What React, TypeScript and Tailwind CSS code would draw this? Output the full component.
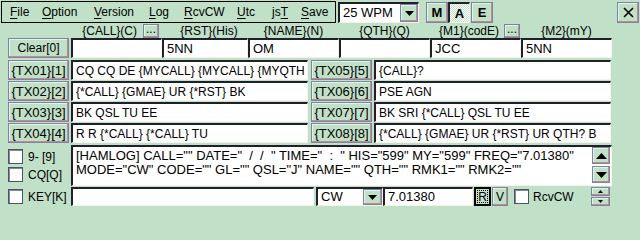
import React from "react";

const face = "bg-[#c0e0c8]";
const btn =
    "bg-[#c0e0c8] border border-[#7c84a4] shadow-[inset_-1px_-1px_0_#c08c8c,inset_1px_1px_0_#e4f2e8] flex items-center justify-center leading-none";
const sunken =
    "bg-white border-t-2 border-l-2 border-b border-r border-t-[#20202c] border-l-[#20202c] border-b-[#f4f4e8] border-r-[#f4f4e8]";

const Tri = ({ up = false, size = "md" }: { up?: boolean; size?: "sm" | "md" | "lg" }) => {
    const [w, h] = size === "sm" ? [5, 3] : size === "lg" ? [11, 6] : [9, 5];
    return (
        <svg width={w} height={h} viewBox={`0 0 ${w} ${h}`}>
            <polygon points={up ? `${w / 2},0 ${w},${h} 0,${h}` : `0,0 ${w},0 ${w / 2},${h}`} fill="#000" />
        </svg>
    );
};

const Field = ({ w, text = "" }: { w: string; text?: string }) => (
    <div className={`${w} h-full ${sunken} flex items-center pl-[3px] whitespace-pre overflow-hidden`}>{text}</div>
);

const Check = ({ label }: { label: string }) => (
    <div className="flex items-center gap-[5px] h-[15px]">
        <div className="w-[15px] h-[15px] bg-white border border-[#4c5464] shadow-[inset_1px_1px_0_#8088a0]" />
        <span>{label}</span>
    </div>
);

const Ellipsis = () => (
    <div className={`${btn} w-[16px] h-[14px] pb-[4px]`}>...</div>
);

const menu: [string, string, string][] = [
    ["", "F", "ile"],
    ["", "O", "ption"],
    ["", "V", "ersion"],
    ["", "L", "og"],
    ["", "R", "cvCW"],
    ["", "U", "tc"],
    ["js", "T", ""],
    ["", "S", "ave"],
];
const menuW = ["w-[32px]", "w-[52px]", "w-[55px]", "w-[35px]", "w-[53px]", "w-[35px]", "w-[29px]", "w-[30px]"];

const tx = [
    ["{TX01}[1]", "CQ CQ DE {MYCALL} {MYCALL} {MYQTH", "{TX05}[5]", "{CALL}?"],
    ["{TX02}[2]", "{*CALL} {GMAE} UR {*RST} BK", "{TX06}[6]", "PSE AGN"],
    ["{TX03}[3]", "BK QSL TU EE", "{TX07}[7]", "BK SRI {*CALL} QSL TU EE"],
    ["{TX04}[4]", "R R {*CALL} {*CALL} TU", "{TX08}[8]", "{*CALL} {GMAE} UR {*RST} UR QTH? B"],
];

export default function App() {
    return (
        <div className={`w-[640px] h-[240px] ${face} text-black text-[12px] font-['Liberation_Sans',Arial,sans-serif] overflow-hidden flex flex-col`}>
            {/* top bar */}
            <div className="flex items-start pt-[1px] h-[23px]">
                <div className="ml-[1px] w-[335px] h-[22px] border border-black flex items-center pl-[8px] leading-none">
                    {menu.map(([a, u, b], i) => (
                        <span key={i} className={`${menuW[i]} shrink-0 whitespace-pre`}>
                            {a}
                            <span className="underline underline-offset-2">{u}</span>
                            {b}
                        </span>
                    ))}
                </div>
                <div className={`ml-[2px] mt-[1px] w-[81px] h-[21px] ${sunken} flex items-center`}>
                    <span className="flex-1 pl-[3px] text-[13px]">25 WPM</span>
                    <div className={`${btn} w-[18px] h-full`}>
                        <Tri />
                    </div>
                </div>
                <div className={`ml-[7px] mt-[1px] w-[22px] h-[21px] ${btn} font-bold text-[13px]`}>M</div>
                <div className="mt-[1px] w-[22px] h-[21px] border-t-2 border-l-2 border-t-[#202030] border-l-[#202030] border-b border-r border-b-[#f0f0e8] border-r-[#f0f0e8] bg-[repeating-conic-gradient(#ffffff_0_25%,#c0e0c8_0_50%)] bg-[length:2px_2px] flex items-center justify-center font-bold text-[13px] leading-none pt-[1px]">
                    A
                </div>
                <div className={`ml-[1px] mt-[1px] w-[22px] h-[21px] ${btn} font-bold text-[13px]`}>E</div>
                <div className="flex-1" />
                <div className={`mt-[1px] mr-[1px] w-[22px] h-[21px] ${btn}`}>
                    <svg width="11" height="11" viewBox="0 0 11 11">
                        <path d="M1 1 L10 10 M10 1 L1 10" stroke="#000" strokeWidth="1.6" />
                    </svg>
                </div>
            </div>

            {/* labels */}
            <div className="flex h-[15px] pl-[71px] items-center leading-none">
                <div className="w-[91px] flex items-center justify-end gap-[6px] pr-[3px]">
                    <span>{"{CALL}(C)"}</span>
                    <Ellipsis />
                </div>
                <div className="w-[86px] text-center pl-[8px]">{"{RST}(His)"}</div>
                <div className="w-[91px] text-center">{"{NAME}(N)"}</div>
                <div className="w-[91px] text-center">{"{QTH}(Q)"}</div>
                <div className="w-[91px] flex items-center justify-end gap-[5px] pr-[1px]">
                    <span>{"{M1}(codE)"}</span>
                    <Ellipsis />
                </div>
                <div className="w-[91px] text-center">{"{M2}(mY)"}</div>
            </div>

            {/* call row */}
            <div className="flex h-[20px] pl-[8px] text-[13px]">
                <div className={`${btn} w-[61px] h-full mr-[2px] text-[12px]`}>Clear[0]</div>
                <Field w="w-[91px]" />
                <Field w="w-[86px]" text="5NN" />
                <Field w="w-[91px]" text="OM" />
                <Field w="w-[91px]" />
                <Field w="w-[91px]" text="JCC" />
                <Field w="w-[91px]" text="5NN" />
            </div>

            {/* tx rows */}
            <div className="flex flex-col gap-[1px] mt-[2px] pl-[8px]">
                {tx.map(([b1, t1, b2, t2]) => (
                    <div key={b1} className="flex h-[20px]">
                        <div className={`${btn} w-[61px] h-full mr-[2px] text-[13px]`}>{b1}</div>
                        <Field w="w-[237px]" text={t1} />
                        <div className={`${btn} w-[61px] h-full ml-[3px] mr-[2px] text-[13px]`}>{b2}</div>
                        <Field w="w-[237px]" text={t2} />
                    </div>
                ))}
            </div>

            {/* log area */}
            <div className="flex mt-[2px] h-[41px]">
                <div className="w-[63px] ml-[8px] flex flex-col gap-[3px] pt-[4px]">
                    <Check label="9- [9]" />
                    <Check label="CQ[Q]" />
                </div>
                <div className={`w-[541px] h-full ${sunken} flex`}>
                    <div className="flex-1 pl-[3px] pt-[2px] text-[13px] leading-[14px] whitespace-pre overflow-hidden">
                        {'[HAMLOG] CALL="" DATE="  /  /  " TIME="  :  " HIS="599" MY="599" FREQ="7.01380"\nMODE="CW" CODE="" GL="" QSL="J" NAME="" QTH="" RMK1="" RMK2=""'}
                    </div>
                    <div className="w-[18px] flex flex-col gap-[2px] mr-[1px]">
                        <div className={`${btn} h-[17px]`}>
                            <Tri up size="lg" />
                        </div>
                        <div className={`${btn} h-[17px]`}>
                            <Tri size="lg" />
                        </div>
                    </div>
                </div>
            </div>

            {/* key row */}
            <div className="flex mt-[1px] h-[19px] items-center">
                <div className="w-[63px] ml-[8px]">
                    <Check label="KEY[K]" />
                </div>
                <Field w="w-[243px]" />
                <div className={`ml-[2px] w-[67px] h-full ${sunken} flex items-center`}>
                    <span className="flex-1 pl-[3px] text-[13px]">CW</span>
                    <div className={`${btn} w-[19px] h-full`}>
                        <Tri />
                    </div>
                </div>
                <div className="w-[90px] h-full text-[13px] flex">
                    <Field w="w-full" text="7.01380" />
                </div>
                <div className="ml-[1px] w-[17px] h-full border-2 border-black bg-[#c0e0c8] flex items-center justify-center p-[1px]">
                    <div className="w-full h-full border border-dotted border-black flex items-center justify-center leading-none">R</div>
                </div>
                <div className={`ml-[1px] w-[16px] h-full ${btn}`}>V</div>
                <div className="ml-[6px] w-[15px] h-[15px] bg-white border border-[#4c5464] shadow-[inset_1px_1px_0_#8088a0]" />
                <span className="ml-[4px]">RcvCW</span>
                <div className="ml-auto mr-[30px] w-[19px] h-full flex flex-col gap-[1px]">
                    <div className={`${btn} flex-1`}>
                        <Tri up size="sm" />
                    </div>
                    <div className={`${btn} flex-1`}>
                        <Tri size="sm" />
                    </div>
                </div>
            </div>
        </div>
    );
}
